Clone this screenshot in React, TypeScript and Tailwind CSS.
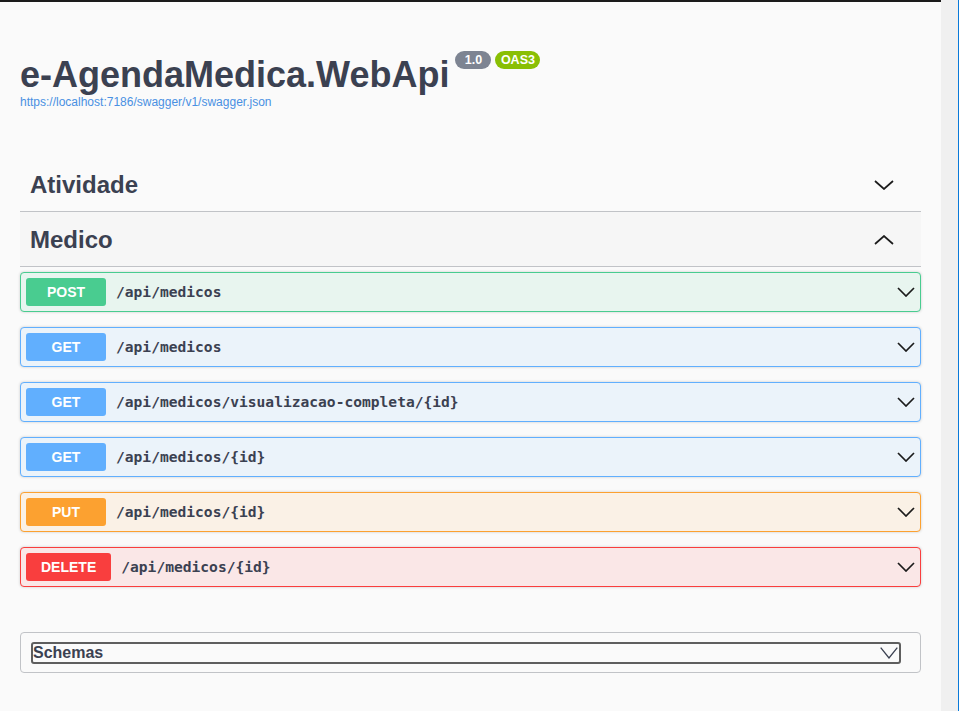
import React from "react";

type Op = {
  method: string;
  path: string;
  box: string;
  badge: string;
};

const ops: Op[] = [
  { method: "POST", path: "/api/medicos", box: "border-[#49cc90] bg-[#e8f5ef]", badge: "bg-[#49cc90]" },
  { method: "GET", path: "/api/medicos", box: "border-[#61affe] bg-[#ebf3fa]", badge: "bg-[#61affe]" },
  { method: "GET", path: "/api/medicos/visualizacao-completa/{id}", box: "border-[#61affe] bg-[#ebf3fa]", badge: "bg-[#61affe]" },
  { method: "GET", path: "/api/medicos/{id}", box: "border-[#61affe] bg-[#ebf3fa]", badge: "bg-[#61affe]" },
  { method: "PUT", path: "/api/medicos/{id}", box: "border-[#fca130] bg-[#faf1e6]", badge: "bg-[#fca130]" },
  { method: "DELETE", path: "/api/medicos/{id}", box: "border-[#f93e3e] bg-[#fae7e7]", badge: "bg-[#f93e3e]" },
];

const Chevron = ({ up = false, w = 20, h = 10 }: { up?: boolean; w?: number; h?: number }) => (
  <svg width={w} height={h} viewBox={`0 0 ${w} ${h}`} fill="none">
    <polyline
      points={up ? `1,${h - 1} ${w / 2},1 ${w - 1},${h - 1}` : `1,1 ${w / 2},${h - 1} ${w - 1},1`}
      stroke="#1b1b1b"
      strokeWidth="1.7"
    />
  </svg>
);

const TagRow = ({ name, open = false }: { name: string; open?: boolean }) => (
  <div
    className={`flex items-center justify-between border-b border-[#c1c3c7] pl-[10px] pr-[27px] ${
      open ? "h-[55px] bg-[#f6f6f6] pt-[2px]" : "h-[54px] pt-[1px]"
    }`}
  >
    <h3 className="text-[24px] font-bold text-[#3b4151]">{name}</h3>
    <Chevron up={open} w={20} h={10} />
  </div>
);

export default function App() {
  return (
    <div className="flex h-[711px] w-[959px] overflow-hidden font-['Liberation_Sans',Arial,sans-serif]">
      <div className="w-[941px] border-t-2 border-[#1b1b1b] bg-[#fafafa] px-5">
        {/* Info header */}
        <div className="mt-[52px] flex items-start">
          <h2 className="text-[36px] font-bold leading-[41px] text-[#3b4151]">e-AgendaMedica.WebApi</h2>
          <div className="ml-[6px] mt-[-3px] flex gap-[4px]">
            <span className="flex h-[18px] w-[36px] items-center justify-center rounded-full bg-[#7d8492] text-[12.5px] font-bold text-white">
              1.0
            </span>
            <span className="flex h-[18px] w-[45px] items-center justify-center rounded-full bg-[#89bf04] text-[12.5px] font-bold text-white">
              OAS3
            </span>
          </div>
        </div>
        <a className="block text-[12px] leading-[14px] text-[#4990e2]">
          https://localhost:7186/swagger/v1/swagger.json
        </a>

        {/* Tags */}
        <div className="mt-[49px]">
          <TagRow name="Atividade" />
          <TagRow name="Medico" open />
          <div className="mt-[5px] flex flex-col gap-[15px]">
            {ops.map((op, i) => (
              <div
                key={i}
                className={`flex h-[40px] items-center rounded-[4px] border pl-[5px] pr-[5px] shadow-[0_0_3px_rgba(0,0,0,0.19)] ${op.box}`}
              >
                <span
                  className={`flex h-[28px] min-w-[80px] items-center justify-center rounded-[3px] px-[15px] text-[14px] font-bold text-white ${op.badge}`}
                >
                  {op.method}
                </span>
                <span className="flex-1 px-[10px] font-['DejaVu_Sans_Mono',monospace] text-[14.6px] font-bold text-[#3b4151]">
                  {op.path}
                </span>
                <Chevron w={18} h={10} />
              </div>
            ))}
          </div>
        </div>

        {/* Schemas */}
        <section className="mt-[45px] rounded-[4px] border border-[#c1c3c7] pb-[8px] pl-[10px] pr-[19px] pt-[9px]">
          <button className="flex h-[22px] w-full items-center justify-between rounded-[3px] border-2 border-[#5e5e5e] pr-[1px]">
            <span className="text-[16px] font-bold text-[#3b4151]">Schemas</span>
            <svg width="18" height="12" viewBox="0 0 18 12" fill="none">
              <polyline points="0.7,0.7 9,11 17.3,0.7" stroke="#3b4151" strokeWidth="1.3" />
            </svg>
          </button>
        </section>
      </div>
      <div className="w-[17px] bg-[#f0f0f0]" />
      <div className="w-[1px] bg-[#0a7ad9]" />
    </div>
  );
}
